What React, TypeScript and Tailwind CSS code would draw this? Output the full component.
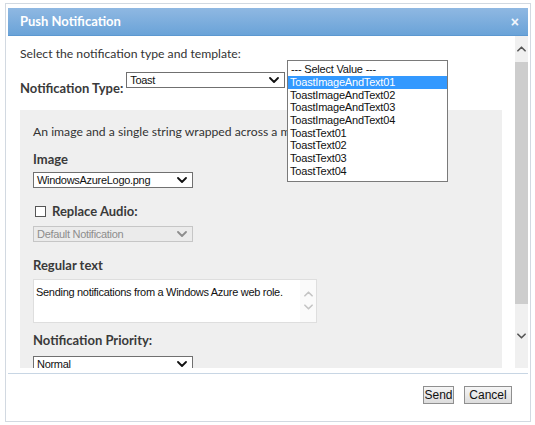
import React from 'react';

const ui = { fontFamily: 'Lato, "Open Sans", sans-serif' };
const arial = { fontFamily: '"Liberation Sans", Arial, sans-serif' };

const templates = [
  'ToastImageAndText01',
  'ToastImageAndText02',
  'ToastImageAndText03',
  'ToastImageAndText04',
  'ToastText01',
  'ToastText02',
  'ToastText03',
  'ToastText04',
];

function Chevron({ color = '#111', up = false, w = 10 }: { color?: string; up?: boolean; w?: number }) {
  return (
    <svg width={w} height="6" viewBox="0 0 10 6" className="shrink-0">
      <path
        d={up ? 'M1 5 L5 1 L9 5' : 'M1 1 L5 5 L9 1'}
        fill="none"
        stroke={color}
        strokeWidth="1.8"
        strokeLinecap="round"
        strokeLinejoin="round"
      />
    </svg>
  );
}

function Select({ value, width = 'w-[160px]', disabled = false }: { value: string; width?: string; disabled?: boolean }) {
  return (
    <div
      className={`${width} h-[16px] flex items-center justify-between pl-[3px] pr-[5px] border ${
        disabled ? 'bg-[#ebebeb] border-[#c6c6c6] text-[#8d8d8d]' : 'bg-white border-[#707070] text-[#111]'
      } text-[11px] tracking-[-0.3px] leading-none`}
      style={arial}
    >
      <span>{value}</span>
      <Chevron color={disabled ? '#8d8d8d' : '#111'} />
    </div>
  );
}

function Label({ children, className = '' }: { children: React.ReactNode; className?: string }) {
  return <div className={`text-[13px] font-bold text-[#3a3a3a] leading-[18px] ${className}`}>{children}</div>;
}

export default function App() {
  return (
    <div className="w-[535px] h-[425px] bg-white overflow-hidden pl-[5px] pt-[3px]" style={ui}>
      <div className="w-[526px] h-[419px] border border-[#d2d9e1] pt-[4px] px-[2px] flex flex-col bg-white">
        {/* title bar */}
        <div className="h-[28px] shrink-0 flex items-center justify-between pl-[12px] pr-[9px] bg-gradient-to-b from-[#8fb8e2] to-[#6aa3d8] border-b border-[#5c98d0]">
          <span className="text-white text-[13px] font-bold">Push Notification</span>
          <span className="text-white/90 text-[14px] font-bold leading-none" style={arial}>
            ×
          </span>
        </div>

        {/* scrolling body */}
        <div className="h-[332px] shrink-0 flex relative">
          <div className="flex-1 overflow-hidden pt-[10px]">
            <div className="pl-[12px] text-[12.2px] leading-[16px] text-[#333]">
              Select the notification type and template:
            </div>
            <div className="pl-[12px] mt-[10px] flex items-start gap-[3px]">
              <Label className="mt-[7px]">Notification Type:</Label>
              <Select value="Toast" width="w-[159px]" />
            </div>

            <div className="ml-[12px] w-[482px] mt-[13px] bg-[#efefef] pl-[13px] pt-[14px] pb-[20px]">
              <div className="text-[12.2px] leading-[16px] text-[#333] whitespace-nowrap">
                An image and a single string wrapped across a m
              </div>
              <Label className="mt-[10px]">Image</Label>
              <div className="mt-[4px]">
                <Select value="WindowsAzureLogo.png" />
              </div>
              <div className="mt-[15px] h-[16px] flex items-center gap-[6px] pl-[2px]">
                <span className="w-[11px] h-[11px] border border-[#555] bg-white" />
                <Label>Replace Audio:</Label>
              </div>
              <div className="mt-[7px]">
                <Select value="Default Notification" disabled />
              </div>
              <Label className="mt-[14px]">Regular text</Label>
              <div
                className="mt-[5px] w-[284px] h-[44px] bg-white border border-[#dedede] flex text-[11px] tracking-[-0.3px] text-[#111]"
                style={arial}
              >
                <div className="flex-1 pl-[2px] pt-[4px]">Sending notifications from a Windows Azure web role.</div>
                <div className="w-[16px] bg-[#fafafa] flex flex-col items-center pt-[11px] gap-[7px]">
                  <Chevron color="#c4c4c4" up w={9} />
                  <Chevron color="#c4c4c4" w={9} />
                </div>
              </div>
              <Label className="mt-[8px]">Notification Priority:</Label>
              <div className="mt-[7px]">
                <Select value="Normal" />
              </div>
            </div>
          </div>

          {/* window scrollbar */}
          <div className="w-[13px] bg-[#f0f0f0] flex flex-col items-center">
            <div className="h-[26px] flex items-center justify-center">
              <Chevron color="#555" up w={9} />
            </div>
            <div className="w-full h-[242px] bg-[#cdcdcd]" />
            <div className="flex-1 flex items-center justify-center">
              <Chevron color="#555" w={9} />
            </div>
          </div>

          {/* open dropdown list */}
          <div
            className="absolute left-[279px] top-[24px] w-[161px] h-[122px] bg-white border border-[#7a7a7a] pt-[1px] text-[11px] tracking-[-0.2px] text-[#111]"
            style={arial}
          >
            <div className="h-[14px] pl-[3px] leading-[14px]">--- Select Value ---</div>
            {templates.map((t, i) => (
              <div
                key={t}
                className={`h-[12.7px] leading-[12.7px] pl-[2px] ${i === 0 ? 'bg-[#3399ff] text-white' : ''}`}
              >
                {t}
              </div>
            ))}
          </div>
        </div>

        {/* footer */}
        <div className="mt-[5px] border-t border-[#c8d6e4] flex justify-end gap-[10px] pt-[12px] pr-[16px]">
          <button
            className="w-[31px] h-[18px] flex items-center justify-center border border-[#8f8f8f] bg-gradient-to-b from-[#f6f6f6] to-[#dddddd] text-[12px] text-[#111] leading-none"
            style={arial}
          >
            Send
          </button>
          <button
            className="w-[48px] h-[18px] flex items-center justify-center border border-[#8f8f8f] bg-gradient-to-b from-[#f6f6f6] to-[#dddddd] text-[12px] text-[#111] leading-none"
            style={arial}
          >
            Cancel
          </button>
        </div>
      </div>
    </div>
  );
}
